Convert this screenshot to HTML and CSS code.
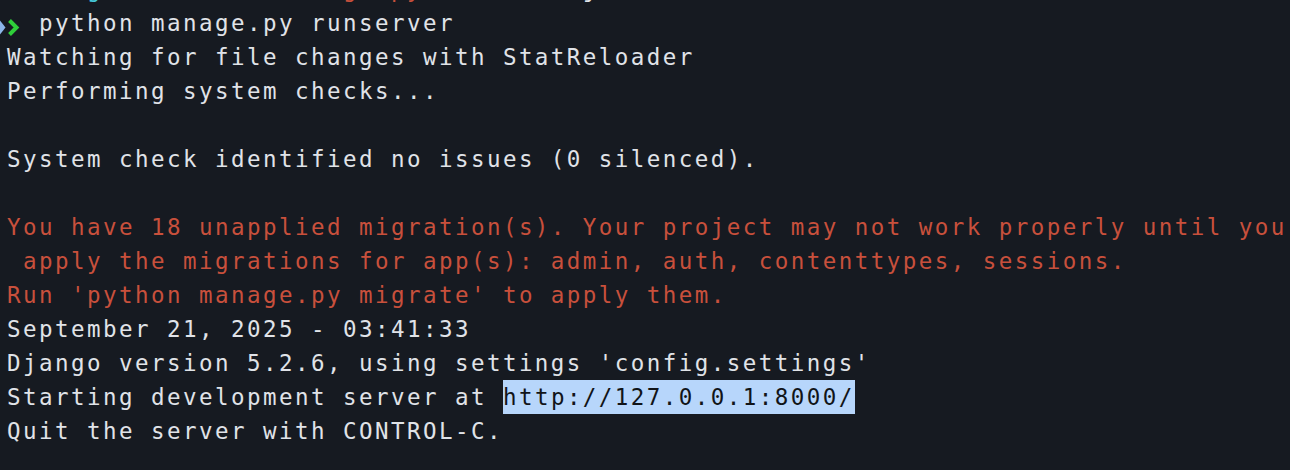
FILE: index.html
```html
<!DOCTYPE html>
<html lang="en">
<head>
<meta charset="utf-8">
<title>Terminal</title>
<link rel="stylesheet" href="styles.css">
</head>
<body>
<div class="term">
  <div class="line cut"><span class="cyan">     g</span><span class="red">               g  py</span><span>          j</span></div>
  <div class="line"><svg class="prompt" width="23" height="34" viewBox="0 0 23 34"><polygon points="-3,14.5 0,14.5 5.5,21.5 0,28.5 -3,28.5" fill="#8cb6ea"/><polyline points="9.5,14.5 16.5,21.5 9.5,28.5" fill="none" stroke="#2fcf3a" stroke-width="4" stroke-linejoin="miter"/></svg> python manage.py runserver</div>
  <div class="line">Watching for file changes with StatReloader</div>
  <div class="line">Performing system checks...</div>
  <div class="line"> </div>
  <div class="line">System check identified no issues (0 silenced).</div>
  <div class="line"> </div>
  <div class="line red">You have 18 unapplied migration(s). Your project may not work properly until you</div>
  <div class="line red"> apply the migrations for app(s): admin, auth, contenttypes, sessions.</div>
  <div class="line red">Run 'python manage.py migrate' to apply them.</div>
  <div class="line">September 21, 2025 - 03:41:33</div>
  <div class="line">Django version 5.2.6, using settings 'config.settings'</div>
  <div class="line">Starting development server at <span class="sel">http://127.0.0.1:8000/</span></div>
  <div class="line">Quit the server with CONTROL-C.</div>
</div>
</body>
</html>
```
FILE: styles.css
```css
html, body {
  margin: 0;
  padding: 0;
  background: #161a21;
  overflow: hidden;
}
body {
  width: 1290px;
  height: 470px;
}
.term {
  margin-top: -28px;
  padding-left: 7px;
  font-family: "DejaVu Sans Mono", "Liberation Mono", monospace;
  font-size: 22.5px;
  letter-spacing: 2.45px;
  color: #e0e3e8;
}
.line {
  height: 34px;
  line-height: 34px;
  white-space: pre;
}
.red {
  color: #c8503c;
}
.cyan {
  color: #45c8d8;
}
.prompt {
  display: inline-block;
  vertical-align: top;
  margin-left: -7px;
}
.sel {
  display: inline-block;
  height: 34px;
  line-height: 34px;
  vertical-align: top;
  background: #b7d6fb;
  color: #111418;
}
```
